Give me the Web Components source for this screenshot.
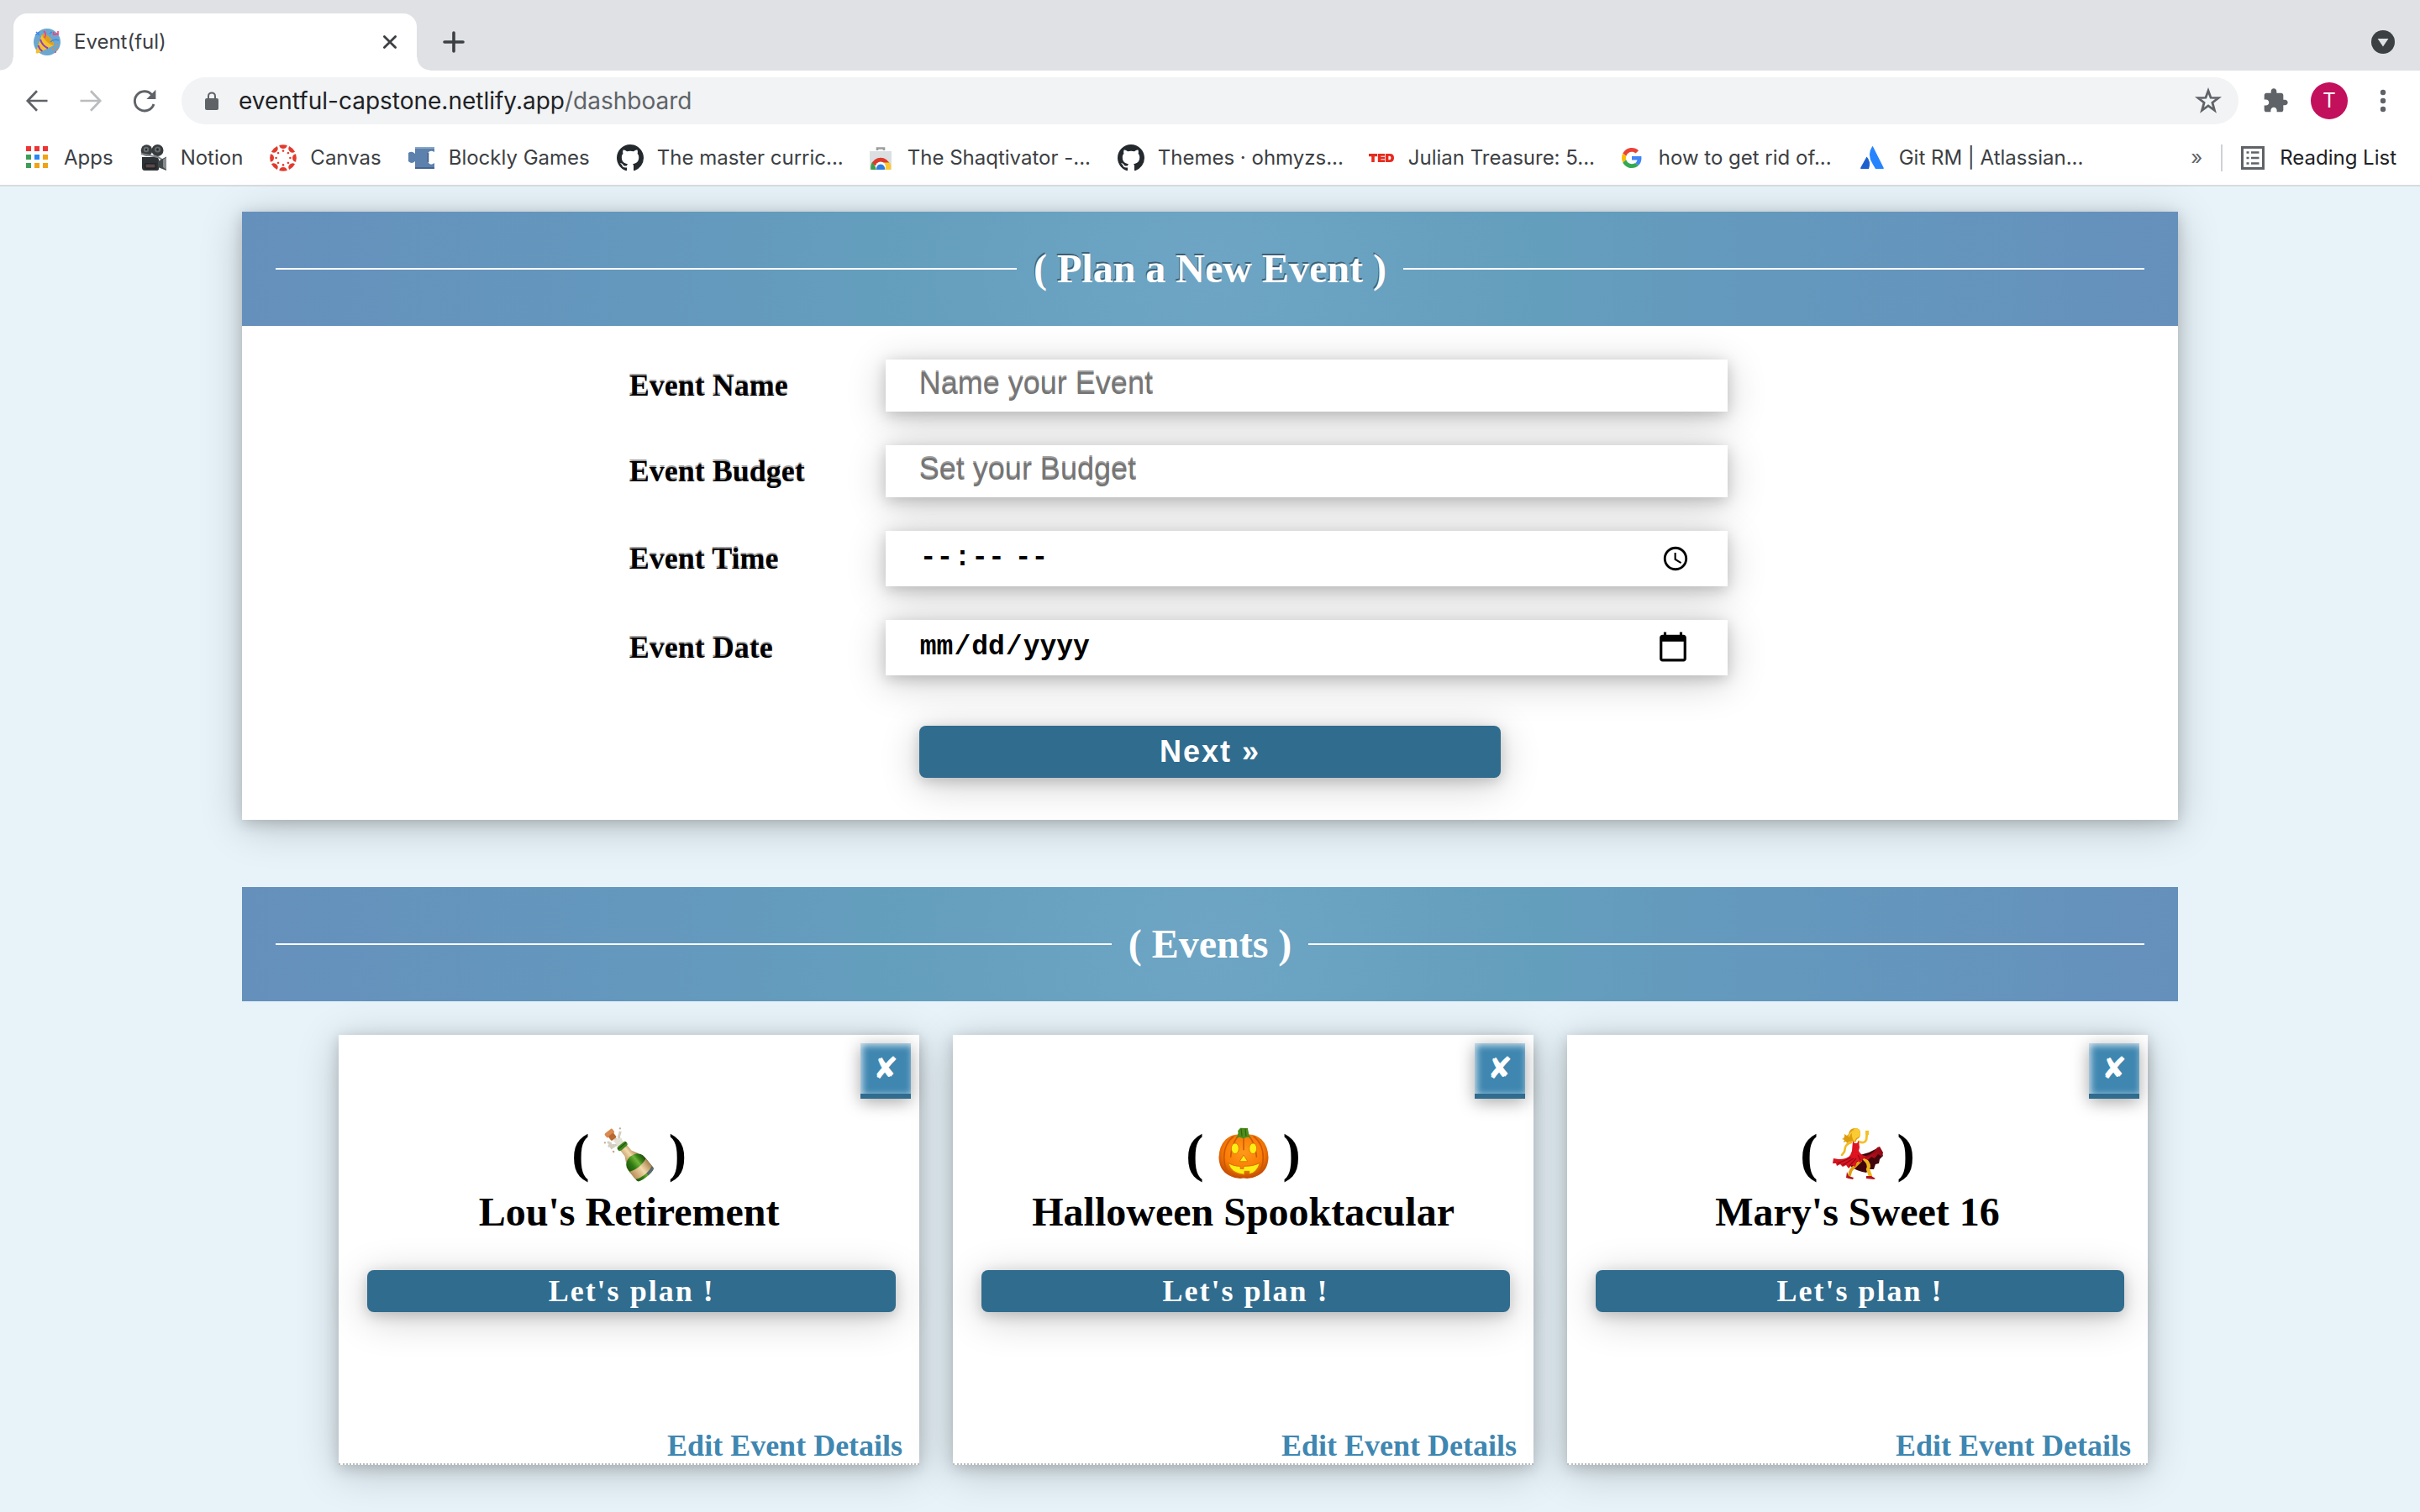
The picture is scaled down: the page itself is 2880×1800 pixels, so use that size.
<!DOCTYPE html>
<html lang="en">
<head>
<meta charset="utf-8">
<title>Event(ful)</title>
<style>
  html, body { margin: 0; min-height: 100%; }
  body {
    background: #e7f3f9;
    font-family: "Liberation Serif", "Times New Roman", serif;
    color: #000;
    --ui: Inter, "Liberation Sans", sans-serif;
    --shadow: 0 4px 16px rgba(0,0,0,.18), 0 8px 48px rgba(0,0,0,.2);
    --deep: #306c8e;
    --sky: #3f87b1;
  }
</style>
</head>
<body>
<browser-tabs></browser-tabs>
<browser-toolbar></browser-toolbar>
<bookmark-bar>
  <bookmark-item icon="apps">Apps</bookmark-item>
  <bookmark-item icon="camera">Notion</bookmark-item>
  <bookmark-item icon="canvas">Canvas</bookmark-item>
  <bookmark-item icon="blockly">Blockly Games</bookmark-item>
  <bookmark-item icon="github" clipped>The master curric...</bookmark-item>
  <bookmark-item icon="store" clipped>The Shaqtivator -...</bookmark-item>
  <bookmark-item icon="github" clipped>Themes · ohmyzs...</bookmark-item>
  <bookmark-item icon="ted" clipped>Julian Treasure: 5...</bookmark-item>
  <bookmark-item icon="google">how to get rid of...</bookmark-item>
  <bookmark-item icon="atlassian" clipped>Git RM | Atlassian...</bookmark-item>
</bookmark-bar>
<event-dashboard>
  <event-form slot="form"></event-form>
  <event-card icon="bottle" name="Lou's Retirement"></event-card>
  <event-card icon="pumpkin" name="Halloween Spooktacular"></event-card>
  <event-card icon="dancer" name="Mary's Sweet 16"></event-card>
</event-dashboard>

<script>
const ICONS = {
  party: ['0 0 32 32', `<circle cx="16" cy="16" r="16" fill="#6ba7ce"/>
    <path d="M10 7Q14 6 19 11 25 17 24 20L5 29.500Q2 30 2.800 27z" fill="#f6c12f"/>
    <path d="M10 7Q14 6 19 11 25 17 24 20 20 20 15 15 10 10 10 7z" fill="#e0a01c"/>
    <path d="M8 13Q10 20 17 23.500M5.500 20Q7 25 10.500 27" stroke="#8b3fc0" stroke-width="2" fill="none"/>
    <path d="M12 3Q16 6 13 11M24 4Q22 9 28 6M29 3V8" stroke="#f0427c" stroke-width="1.600" fill="none"/>
    <path d="M20 16Q24 12 30 14M3 4 7 8M2 8 7 4M19 6 22 4" stroke="#3a86f0" stroke-width="1.500" fill="none"/>
    <g fill="#f5862f"><circle cx="27" cy="20" r="1.100"/><circle cx="23" cy="24" r="1"/><circle cx="28" cy="25" r="1"/></g><circle cx="26" cy="28" r="1" fill="#f0427c"/>`],
  close: ['0 0 16 16', `<path d="M1.400 1.400 14.600 14.600M14.600 1.400 1.400 14.600" stroke="#3c4043" stroke-width="2.800" stroke-linecap="round"/>`],
  plus: ['0 0 26 26', `<path d="M13 2V24M2 13H24" stroke="#3c4043" stroke-width="3.600" stroke-linecap="round"/>`],
  drop: ['0 0 28 28', `<circle cx="14" cy="14" r="14" fill="#3c4043"/><path d="M7.600 10H20.400L14 19.400z" fill="#dfe1e5"/>`],
  back: ['0 0 26 26', `<path d="M25.500 13H2.400M13 1.200 1.800 13 13 24.800" fill="none" stroke="#5f6368" stroke-width="2.700"/>`],
  forward: ['0 0 26 26', `<path d="M.5 13H23.600M13 1.200 24.200 13 13 24.800" fill="none" stroke="#babcbe" stroke-width="2.700"/>`],
  reload: ['0 0 28 28', `<path d="M22.600 6.600A11.600 11.600 0 1 0 25 18" fill="none" stroke="#5f6368" stroke-width="2.900"/><path d="M27.400.8V12H16.400z" fill="#5f6368"/>`],
  lock: ['0 0 16 22', `<rect y="8" width="16" height="14" rx="2" fill="#5f6368"/><path d="M4 9V5.400a4 4 0 0 1 8 0V9" fill="none" stroke="#5f6368" stroke-width="2"/>`],
  star: ['0 0 30 30', `<path d="M15 3.800 17.800 11.500 26.400 11.800 19.600 17.100 22 25.600 15 20.600 8 25.600 10.400 17.100 3.600 11.800 12.200 11.500z" fill="none" stroke="#5f6368" stroke-width="2.600"/>`],
  puzzle: ['0 0 24 24', `<path d="M20.500 11H19V7c0-1.100-.9-2-2-2h-4V3.500C13 2.120 11.880 1 10.500 1S8 2.120 8 3.500V5H4c-1.100 0-1.990.9-1.990 2v3.800H3.500c1.490 0 2.700 1.210 2.700 2.700s-1.210 2.700-2.700 2.700H2V20c0 1.100.9 2 2 2h3.800v-1.500c0-1.490 1.210-2.700 2.700-2.700 1.490 0 2.700 1.210 2.700 2.700V22H17c1.100 0 2-.9 2-2v-4h1.500c1.380 0 2.500-1.120 2.500-2.500S21.880 11 20.500 11z" fill="#5f6368"/>`],
  dots: ['0 0 8 28', `<g fill="#5f6368"><circle cx="4" cy="4" r="3.200"/><circle cx="4" cy="14" r="3.200"/><circle cx="4" cy="24" r="3.200"/></g>`],
  apps: ['0 0 32 32', `<path d="M3 2h6v6H3zM13 2h6v6h-6zM23 2h6v6h-6z" fill="#f03434"/><path d="M3 12h6v6H3zM3 22h6v6H3z" fill="#3d9e57"/><path d="M13 12h6v6h-6z" fill="#2a86f5"/><path d="M23 12h6v6h-6zM13 22h6v6h-6zM23 22h6v6h-6z" fill="#f0a313"/>`],
  camera: ['0 0 32 32', `<circle cx="7.500" cy="7" r="6.800" fill="#3b3f42"/><circle cx="20.500" cy="7" r="7" fill="#373b3e"/><circle cx="7" cy="6" r="3.200" fill="#6b7073"/><circle cx="20.500" cy="6" r="3.600" fill="#64696c"/><circle cx="20.500" cy="6" r="1.400" fill="#24282a"/><circle cx="7" cy="6" r="1.200" fill="#24282a"/>
    <path d="M2 15H18Q22 15 22 19V29Q22 31 19 31H5Q2 31 2 27z" fill="#2d3236"/><path d="M1 11 21 15 26 18" stroke="#7d8386" stroke-width="2" fill="none"/>
    <path d="M21 20 31 14.500V31L21 27z" fill="#43484b"/><path d="M27 18 31 15V30L27 27z" fill="#858b8e"/><rect x="6" y="23" width="12" height="5" fill="#57494a" stroke="#111" stroke-width=".8"/>`],
  canvas: ['0 0 32 32', (() => {
    let s = '';
    for (let a = 0; a < 360; a += 45) s += `<g transform="rotate(${a} 16 16)"><path d="M11.200 .900A16 16 0 0 1 20.800 .900Q20 5 16 5T11.200 .900z"/><circle cx="16" cy="7.600" r="1.300"/></g>`;
    return `<g fill="#e23b2e">${s}</g>`;
  })()],
  blockly: ['0 0 32 32', `<path d="M8 3H31V9Q26 6 23.500 10V21Q26 26 31 22V29H8V20Q4 24 0 20V10Q4 7 8 11z" fill="#5c81ad"/><path d="M8 4H31" stroke="#86a6c9" stroke-width="2"/><path d="M8 28H31" stroke="#446490" stroke-width="2"/><path d="M23.500 10V21" stroke="#3f5c83" stroke-width="1.500"/>`],
  github: ['0 0 16 16', `<path fill="#24292e" d="M8 0C3.580 0 0 3.580 0 8c0 3.540 2.290 6.530 5.470 7.590.4.070.55-.17.55-.38 0-.19-.01-.82-.01-1.490-2.010.37-2.530-.49-2.690-.94-.09-.23-.48-.94-.82-1.130-.28-.15-.68-.52-.01-.53.63-.01 1.080.58 1.230.82.72 1.210 1.870.87 2.330.66.070-.52.28-.87.51-1.070-1.780-.2-3.640-.89-3.640-3.950 0-.87.31-1.590.82-2.150-.08-.2-.36-1.020.08-2.120 0 0 .67-.21 2.200.82.64-.18 1.320-.27 2-.27s1.360.09 2 .27c1.530-1.040 2.200-.82 2.200-.82.44 1.100.16 1.920.08 2.120.51.56.82 1.270.82 2.150 0 3.070-1.870 3.750-3.650 3.950.29.25.54.73.54 1.480 0 1.070-.01 1.930-.01 2.200 0 .21.15.46.55.38A8.010 8.010 0 0 0 16 8c0-4.420-3.580-8-8-8z"/>`],
  store: ['0 0 32 32', `<path d="M12 7V4.500h8V7" fill="none" stroke="#9e9e9e" stroke-width="2.600"/><path d="M3 8H29V30H3z" fill="#dcdfe1"/>
    <path d="M5 24A11.500 11.500 0 0 1 27 24L16 26z" fill="#db3b2c"/><path d="M4.500 30Q3.500 25 6 21L12 30z" fill="#3e9d4c"/><path d="M18 21.500H27Q29 25 28 30H18z" fill="#fcc934"/><circle cx="16" cy="26.500" r="6" fill="#fff"/><path d="M11.200 30a5 5 0 1 1 9.600 0z" fill="#2f7de1"/><path d="M3 30H29V33H3z" fill="#fff"/>`],
  ted: ['0 0 32 32', `<g fill="#e62b1e"><path d="M1 11H11V14.200H7.800V21H4.200V14.200H1z"/><path d="M11.800 11H20V13.800H15.300V14.800H20V17.200H15.300V18.200H20V21H11.800z"/><path fill-rule="evenodd" d="M20.800 11H26Q31 11 31 16T26 21H20.800zM24.400 13.800V18.200H25.400Q27.400 18.200 27.400 16T25.400 13.800z"/></g>`],
  google: ['0 0 48 48', `<g transform="translate(6 6) scale(.75)"><path fill="#EA4335" d="M24 9.500c3.540 0 6.710 1.220 9.210 3.600l6.850-6.850C35.900 2.380 30.470 0 24 0 14.620 0 6.510 5.380 2.560 13.220l7.980 6.190C12.430 13.720 17.740 9.500 24 9.500z"/><path fill="#4285F4" d="M46.980 24.550c0-1.570-.15-3.090-.38-4.550H24v9.020h12.940c-.58 2.960-2.260 5.480-4.780 7.180l7.730 6c4.510-4.180 7.090-10.360 7.090-17.650z"/><path fill="#FBBC05" d="M10.530 28.590c-.48-1.450-.76-2.990-.76-4.590s.27-3.140.76-4.590l-7.980-6.190C.92 16.460 0 20.120 0 24c0 3.880.92 7.540 2.560 10.780l7.970-6.190z"/><path fill="#34A853" d="M24 48c6.480 0 11.930-2.130 15.890-5.810l-7.730-6c-2.150 1.450-4.920 2.300-8.160 2.300-6.260 0-11.570-4.220-13.470-9.910l-7.980 6.190C6.510 42.620 14.620 48 24 48z"/></g>`],
  atlassian: ['0 0 32 32', `<path d="M9.500 14.500Q15 20 12 29H2.800Q1.600 29 2.200 27.800z" fill="#1c61cf"/><path d="M16 2.500Q9.500 12 16.500 23L20 29H29Q30.200 29 29.700 27.800L17 2.500Q16.500 1.700 16 2.500z" fill="#2684ff"/>`],
  list: ['0 0 28 28', `<rect x="1.500" y="1.500" width="25" height="25" fill="none" stroke="#5f6368" stroke-width="3"/><path d="M6.500 7.500h3M6.500 14h3M6.500 20.500h3M12 7.500h9.500M12 14h9.500M12 20.500h9.500" stroke="#5f6368" stroke-width="2.600"/>`],
  bottle: ['0 0 64 64', `<defs><linearGradient id="g" x1="0" y1="0" x2="1" y2="0"><stop offset="0" stop-color="#1f5a0b"/><stop offset=".3" stop-color="#2f7a12"/><stop offset=".6" stop-color="#6fb53a"/><stop offset=".75" stop-color="#3a8518"/><stop offset="1" stop-color="#1e4a0e"/></linearGradient><linearGradient id="c" x1="0" y1="0" x2="1" y2="0"><stop offset="0" stop-color="#b98f5b"/><stop offset=".55" stop-color="#f3d9a9"/><stop offset="1" stop-color="#a8814f"/></linearGradient></defs>
    <path d="M5 18 9 20 7 23 14 22M9 26 15 22 22 20M21 5 19 12 21 18 14 14" fill="none" stroke="#d3cfc0" stroke-width="3" stroke-linejoin="round"/><path d="M12 16 22 13 26 21 19 25z" fill="#e4e1d6"/>
    <g fill="#c0a894"><circle cx="2" cy="19" r="1.200"/><circle cx="12.500" cy="30" r="1.300"/><circle cx="20.500" cy="1.500" r="1.200"/></g>
    <g transform="translate(9 9) rotate(-38)"><rect x="-6" y="-5.500" width="12" height="6.500" rx="2" fill="#d98a4e"/><rect x="-4" y="0" width="8" height="7" rx="1.500" fill="#b9682f"/></g>
    <g transform="translate(24 24) rotate(-39)">
      <path d="M-5-3H5V10Q6 15 10 19 13 22 13 27V43Q13 47 0 47T-13 43V27Q-13 22-10 19-6 15-5 10z" fill="url(#g)"/>
      <path d="M-5.200 2H5.200V10L9.500 18Q0 12-9.500 18L-5.200 10z" fill="url(#c)"/><rect x="-7" y="-4" width="14" height="6" rx="2.500" fill="#3f861d"/><path d="M-6.500-1.500H6.500" stroke="#1e4a0e" stroke-width="1"/>
      <path d="M-13 29Q0 34 13 29V41Q0 46-13 41z" fill="url(#c)"/><path d="M2 47Q13 46.500 13 43V41Q8 43.500 2 43.600z" fill="#5a6a74"/>
    </g>`],
  pumpkin: ['0 0 64 64', `<defs><radialGradient id="p" cx=".5" cy=".4" r=".6"><stop offset="0" stop-color="#ff9a1a"/><stop offset=".65" stop-color="#f97c06"/><stop offset="1" stop-color="#c24a02"/></radialGradient></defs>
    <path d="M32 10Q44 6 54 15 62 23 62.500 37 62 53 50 59 41 64 32 62.500 23 64 14 59 2 53 1.500 37 2 23 10 15 20 6 32 10z" fill="url(#p)"/>
    <path d="M20 11Q8 20 8 37T18 60M26 10Q17 20 16 37M44 11Q56 20 56 37T46 60M38 10Q47 20 48 37M32 12V28" fill="none" stroke="#cf5703" stroke-width="1.600"/>
    <path d="M25 4 28 .800 37 1 39 11 42 13 36 12 32 14 27 12 22 13Q26 10 25 4z" fill="#4d8d1c"/><path d="M29 2 30 11M34 2 35 11" stroke="#2f6410" stroke-width="1.200"/>
    <g fill="#ffee14" stroke="#d66702" stroke-width=".8"><ellipse cx="21.500" cy="26" rx="4.600" ry="6.500"/><ellipse cx="43.500" cy="26" rx="4.600" ry="6.500"/><path d="M32 34 37 42H27z"/><path d="M13 44Q20 48 28 48V51H32V48Q44 48 52 44 48 56 39 57.500V54H33V58Q17 57 13 44z"/></g>`],
  dancer: ['0 0 62 62', `<defs><linearGradient id="d" x1="0" y1="0" x2="1" y2="0"><stop offset="0" stop-color="#d3121f"/><stop offset=".5" stop-color="#e01420"/><stop offset="1" stop-color="#8a0914"/></linearGradient></defs>
    <path d="M30 34 44 30 56 24 61 34 57 38 56 43 52 44 50 50 45 50 41 54 36 53 30 51 24 48 22 45z" fill="#41060b"/>
    <g fill="none" stroke-linecap="round" stroke-linejoin="round"><path d="M39 38Q46 44 43 50L46 58" stroke="#f0b61c" stroke-width="4.200"/><path d="M34 40 28 46Q22 50 21 57" stroke="#dfa012" stroke-width="3.800"/><path d="M23 18Q17 20 16 24L15 29 12 33" stroke="#f2ba20" stroke-width="2.600"/><path d="M32 17Q39 20 41 15L42 6" stroke="#f5c026" stroke-width="2.800"/></g>
    <path d="M40 4h4v5h-4z" fill="#f5c026"/>
    <path d="M25 16 27 19 30 19 32 16 33 24 32 28Q35 34 41 34 49 32 54 24L57 23 61 30 60 35 55 32 51 37 47 35 43 39 38 37 34 42 30 40 28 47 24 45 20 49 17 45 13 47 10 44 6 46 5 43 1 43 2 37 8 38Q19 38 22 33L24 28z" fill="url(#d)"/>
    <path d="M7 43 23 36M13 45 26 37M21 46 29 37M40 36 54 28M34 39 31 33" fill="none" stroke="#8f0a15" stroke-width="1.200"/>
    <path d="M20 8Q21 1 28 1 34 1 34 7 34 13 30 14L28 18Q22 15 18 19L17 17 14 18 15 15 12 14Q16 13 15 8L18 10z" fill="#dd9c0c"/><path d="M28 1Q34 1 34 8 33 12 29 13L27 17Q25 15 24 11 23 4 28 1z" fill="#fbcb33"/><path d="M20 11Q23 4 29 4" fill="none" stroke="#f6c838" stroke-width="2"/>
    <path d="M18 53 20 58 26 60 25 62 20 61 17 60zM41 58 47 58 52 61 50 62 41 61z" fill="#b5121d"/>`],
};

const define = (tag, markup) => customElements.define(tag, class extends HTMLElement {
  connectedCallback() {
    if (this.shadowRoot) return;
    const root = this.attachShadow({ mode: 'open' });
    const tpl = document.createElement('template');
    tpl.innerHTML = typeof markup === 'function' ? markup(this) : markup;
    root.append(tpl.content.cloneNode(true));
  }
});

define('ui-icon', el => {
  const [box, body] = ICONS[el.getAttribute('name')];
  return `<style>:host{display:inline-block;width:32px;height:32px;flex:none}svg{display:block;width:100%;height:100%;overflow:visible}</style>
    <svg viewBox="${box}" aria-hidden="true">${body}</svg>`;
});

const BUTTON_RESET = `button{border:0;padding:0;background:none;font:inherit;color:inherit;display:flex;align-items:center;justify-content:center}`;

define('browser-tabs', `<style>
  :host{display:flex;align-items:flex-end;height:84px;background:#dfe1e5;font:24px/32px var(--ui);color:#3c4043}
  ${BUTTON_RESET}
  .foot{width:16px;height:16px}
  .foot.left{background:radial-gradient(circle at 0 0,transparent 15px,#fff 16px)}
  .foot.right{background:radial-gradient(circle at 100% 0,transparent 15px,#fff 16px)}
  .tab{box-sizing:border-box;width:480px;height:68px;padding:0 24px;background:#fff;border-radius:16px 16px 0 0;display:flex;align-items:center;gap:16px}
  .tab span{flex:1}
  .close ui-icon{width:16px;height:16px}
  .new,.menu{height:68px}
  .new{margin-left:15px}
  .new ui-icon{width:26px;height:26px}
  .menu{margin:0 30px 0 auto}
  .menu ui-icon{width:28px;height:28px}
</style>
<div class="foot left"></div>
<div class="tab"><ui-icon name="party"></ui-icon><span>Event(ful)</span><button class="close" aria-label="Close tab"><ui-icon name="close"></ui-icon></button></div>
<div class="foot right"></div>
<button class="new" aria-label="New tab"><ui-icon name="plus"></ui-icon></button>
<button class="menu" aria-label="Search tabs"><ui-icon name="drop"></ui-icon></button>`);

define('browser-toolbar', `<style>
  :host{display:flex;align-items:center;height:72px;padding:0 12px;background:#fff;font:28px/36px var(--ui);color:#202124}
  ${BUTTON_RESET}
  button{width:64px;height:56px}
  .nav ui-icon{width:26px;height:26px}
  .nav.reload ui-icon{width:28px;height:28px}
  .omni{flex:1;height:56px;margin:0 12px;border-radius:28px;background:#f1f3f4;display:flex;align-items:center;padding:0 4px 0 28px}
  .omni .lock{width:16px;height:22px;margin-right:24px}
  .url{flex:1}
  .path{color:#5f6368}
  .star ui-icon,.ext ui-icon{width:32px;height:32px}
  .avatar span{width:44px;height:44px;border-radius:50%;background:#c2105c;color:#fff;font-size:24px;line-height:44px}
  .dots ui-icon{width:8px;height:28px}
</style>
<button class="nav" aria-label="Back"><ui-icon name="back"></ui-icon></button>
<button class="nav" aria-label="Forward"><ui-icon name="forward"></ui-icon></button>
<button class="nav reload" aria-label="Reload"><ui-icon name="reload"></ui-icon></button>
<div class="omni"><ui-icon class="lock" name="lock"></ui-icon><div class="url">eventful-capstone.netlify.app<span class="path">/dashboard</span></div><button class="star" aria-label="Bookmark"><ui-icon name="star"></ui-icon></button></div>
<button class="ext" aria-label="Extensions"><ui-icon name="puzzle"></ui-icon></button>
<button class="avatar" aria-label="Profile"><span>T</span></button>
<button class="dots" aria-label="Menu"><ui-icon name="dots"></ui-icon></button>`);

define('bookmark-bar', `<style>
  :host{display:flex;align-items:center;height:64px;padding:0 28px;background:#fff;border-bottom:2px solid #d9dbde;font:24px/32px var(--ui);color:#3c4043}
  ${BUTTON_RESET}
  nav{display:flex;gap:32px}
  .more{margin-left:auto;margin-right:22px;color:#5f6368}
  .reading{border-left:2px solid #cfd1d4;height:32px;padding-left:22px;gap:18px;color:#202124}
  .reading ui-icon{width:28px;height:28px}
</style>
<nav><slot></slot></nav>
<button class="more">»</button>
<button class="reading"><ui-icon name="list"></ui-icon>Reading List</button>`);

define('bookmark-item', el => `<style>
  :host{display:block}
  a{display:flex;align-items:center;gap:16px;color:inherit;text-decoration:none;white-space:nowrap}
  :host([clipped]) span{width:218px}
</style>
<a href="#"><ui-icon name="${el.getAttribute('icon')}"></ui-icon><span><slot></slot></span></a>`);

define('section-banner', `<style>
  :host{display:flex;align-items:center;gap:20px;height:136px;padding:0 40px;background:radial-gradient(circle,#6ea5c4 0%,#649ebd 35%,#6498bd 60%,#6590bc 100%);color:#fff}
  :host::before,:host::after{content:"";flex:1;height:2px;background:#fff}
  h2{margin:0;font-size:48px;line-height:56px;font-weight:bold;text-shadow:var(--title-shadow,none)}
</style>
<h2><slot></slot></h2>`);

define('event-form', `<style>
  :host{display:block;background:#fff;box-shadow:var(--shadow);--title-shadow:-1px -2px 0 #3d5f74}
  section-banner{position:relative}
  form{display:flex;flex-direction:column;gap:40px;padding:40px 0 50px}
  .row{display:grid;grid-template-columns:305px 1fr;align-items:center;margin:0 536px 0 20%}
  label{font-size:36px;line-height:42px;font-weight:bold;text-shadow:0 -2px 0 rgba(0,0,0,.4)}
  input{box-sizing:border-box;width:100%;height:62px;border:0;padding:0 40px 4px;background:#fff;box-shadow:var(--shadow);font:36px/42px "Liberation Sans",Arial,sans-serif;color:#000;text-shadow:0 -2px 0 rgba(0,0,0,.4);outline:0}
  input::placeholder{color:#757575}
  input.mono{height:66px;padding:0 40px;font:bold 33px/42px "Liberation Mono",monospace;text-shadow:none}
  input.mono::-webkit-calendar-picker-indicator{box-sizing:border-box;width:34px;height:34px;padding:0;margin-right:5px}
  input#date::-webkit-calendar-picker-indicator{width:40px;height:40px}
  button{align-self:center;width:30%;height:62px;margin-top:20px;border:0;padding:0;border-radius:8px;background:var(--deep);color:#fff;box-shadow:var(--shadow);font:bold 36px/42px "Liberation Sans",Arial,sans-serif;letter-spacing:2px}
</style>
<section-banner>( Plan a New Event )</section-banner>
<form>
  <div class="row"><label for="name">Event Name</label><input id="name" type="text" placeholder="Name your Event"></div>
  <div class="row"><label for="budget">Event Budget</label><input id="budget" type="text" placeholder="Set your Budget"></div>
  <div class="row"><label for="time">Event Time</label><input id="time" class="mono" type="time"></div>
  <div class="row"><label for="date">Event Date</label><input id="date" class="mono" type="date"></div>
  <button type="button">Next »</button>
</form>`);

define('event-card', el => `<style>
  :host{box-sizing:border-box;display:flex;flex-direction:column;height:512px;background:#fff;border-bottom:2px dotted #bbb;box-shadow:var(--shadow)}
  .close{align-self:flex-end;box-sizing:border-box;width:60px;height:66px;margin:10px 10px 28px;padding:0;border:0;border-bottom:6px solid var(--deep);background:var(--sky);color:#fff;font:bold 36px/54px "DejaVu Sans",sans-serif;box-shadow:inset 2px 2px 8px rgba(255,255,255,.8),0 4px 20px rgba(0,0,0,.35)}
  h2{margin:0;text-align:center;font-weight:bold;font-size:48px;line-height:66px}
  .badge{display:flex;justify-content:center;align-items:center;gap:16px;font-size:64px;line-height:74px}
  .badge ui-icon{width:62px;height:62px}
  .plan{height:50px;margin:36px 28px 0 34px;padding:0;border:0;border-radius:8px;background:var(--deep);color:#fff;box-shadow:var(--shadow);font:bold 36px/42px "Liberation Serif","Times New Roman",serif;letter-spacing:2px}
  a{margin:auto 20px 0 auto;color:var(--sky);font-weight:bold;font-size:36px;line-height:42px;text-decoration:none}
</style>
<button class="close" aria-label="Remove event">✘</button>
<h2><span class="badge"><span>(</span><ui-icon name="${el.getAttribute('icon')}"></ui-icon><span>)</span></span>${el.getAttribute('name')}</h2>
<button class="plan">Let's plan !</button>
<a href="#">Edit Event Details</a>`);

define('event-dashboard', `<style>
  :host{display:flex;flex-direction:column;gap:40px;width:80%;margin:30px auto 0;padding-bottom:56px}
  .form{margin-bottom:40px}
  .cards{display:grid;grid-template-columns:repeat(3,1fr);gap:40px;padding:0 36px 0 5%}
</style>
<div class="form"><slot name="form"></slot></div>
<section-banner>( Events )</section-banner>
<div class="cards"><slot></slot></div>`);
</script>
</body>
</html>
